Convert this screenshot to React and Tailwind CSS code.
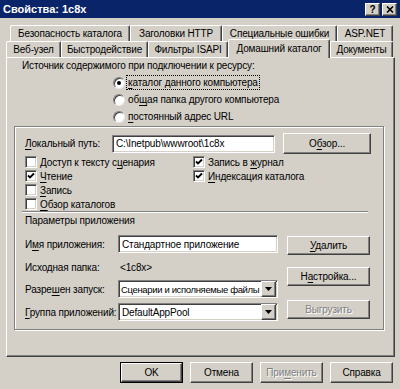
import React from 'react';

const RAISED =
    'border border-t-white border-l-white border-r-[#404040] border-b-[#404040] shadow-[inset_-1px_-1px_0_#808080]';
const SUNKEN =
    'border border-t-[#808080] border-l-[#808080] border-r-white border-b-white shadow-[inset_1px_1px_0_#404040,inset_-1px_-1px_0_#d4d0c8]';
const GREY_TEXT = 'text-[#808080] [text-shadow:1px_1px_0_#fff]';

// "&" marks the access key letter
const Txt = ({ t }) => {
    const i = t.indexOf('&');
    if (i < 0) return <>{t}</>;
    return (
        <>
            {t.slice(0, i)}
            <span className="underline underline-offset-[2px]">{t[i + 1]}</span>
            {t.slice(i + 2)}
        </>
    );
};

const Btn = ({ label, className = '', disabled }) => (
    <div className={`flex items-center justify-center whitespace-nowrap bg-[#d4d0c8] ${RAISED} ${className}`}>
        <span className={disabled ? GREY_TEXT : ''}>
            <Txt t={label} />
        </span>
    </div>
);

const Check = ({ on, label }) => (
    <div className="flex items-center h-[14px] whitespace-nowrap">
        <div className={`w-[12px] h-[12px] bg-white flex items-center justify-center ${SUNKEN}`}>
            {on && (
                <svg width="8" height="8" viewBox="0 0 8 8">
                    <polyline points="1,3.5 3,5.5 7,1.5" fill="none" stroke="#000" strokeWidth="1.8" />
                </svg>
            )}
        </div>
        <span className="ml-[3px]">
            <Txt t={label} />
        </span>
    </div>
);

const Radio = ({ on, label, focus }) => (
    <div className="flex items-center h-[17px] whitespace-nowrap">
        <div className="w-[12px] h-[12px] rounded-full bg-white border border-t-[#808080] border-l-[#808080] border-r-[#e8e8e8] border-b-[#e8e8e8] shadow-[inset_1px_1px_0_#404040] flex items-center justify-center">
            {on && <div className="w-[4px] h-[4px] rounded-full bg-black" />}
        </div>
        <span className={`ml-[2px] px-[1px] ${focus ? 'outline outline-1 outline-dotted outline-black' : ''}`}>
            <Txt t={label} />
        </span>
    </div>
);

const Field = ({ value, select, className = '', textClass = 'pl-[3px]' }) => (
    <div className={`flex items-center bg-white ${SUNKEN} ${className}`}>
        <span className={`flex-1 whitespace-nowrap overflow-hidden ${textClass}`}>{value}</span>
        {select && (
            <div className={`w-[15px] h-full shrink-0 mr-px flex items-center justify-center bg-[#d4d0c8] ${RAISED}`}>
                <svg width="7" height="4" viewBox="0 0 7 4">
                    <path d="M0 0h7L3.5 4z" fill="#000" />
                </svg>
            </div>
        )}
    </div>
);

const Tab = ({ label, w, active }) => (
    <div
        className={`flex items-center justify-center whitespace-nowrap bg-[#d4d0c8] border-t border-l border-r border-t-white border-l-white border-r-[#404040] rounded-t-[2px] shadow-[inset_-1px_0_0_#808080] ${
            active ? 'h-[19px] -mb-px relative z-10 pb-[2px]' : 'h-[16px]'
        }`}
        style={{ width: w }}
    >
        {label}
    </div>
);

const ROW1 = [
    ['Безопасность каталога', 120],
    ['Заголовки HTTP', 92],
    ['Специальные ошибки', 115],
    ['ASP.NET', 56],
];
const ROW2 = [
    ['Веб-узел', 55],
    ['Быстродействие', 87],
    ['Фильтры ISAPI', 80],
    ['Домашний каталог', 102, true],
    ['Документы', 63],
];

export default function App() {
    return (
        <div className="w-[400px] h-[389px] bg-[#d4d0c8] text-black text-[10px] tracking-[-0.15px] leading-[13px] font-['Liberation_Sans',Arial,sans-serif] overflow-hidden flex flex-col">
            {/* title bar */}
            <div className="h-[18px] bg-[#0a246a] flex items-center justify-between pl-[3px] pr-[3px]">
                <span className="text-white font-bold text-[11px] tracking-normal">Свойства: 1c8x</span>
                <div className="flex gap-[2px]">
                    <div className={`w-[15px] h-[13px] bg-[#d4d0c8] flex items-center justify-center font-bold text-[10px] ${RAISED}`}>?</div>
                    <div className={`w-[15px] h-[13px] bg-[#d4d0c8] flex items-center justify-center ${RAISED}`}>
                        <svg width="8" height="7" viewBox="0 0 8 7">
                            <path d="M1 0.5L7 6.5M7 0.5L1 6.5" stroke="#000" strokeWidth="1.6" />
                        </svg>
                    </div>
                </div>
            </div>

            <div className="ml-[6px] w-[389px] mt-[7px]">
                {/* tabs */}
                <div className="flex ml-[4px]">
                    {ROW1.map(([l, w]) => (
                        <Tab key={l} label={l} w={w} />
                    ))}
                </div>
                <div className="flex items-end h-[16px]">
                    {ROW2.map(([l, w, a]) => (
                        <Tab key={l} label={l} w={w} active={a} />
                    ))}
                </div>

                {/* page */}
                <div className={`h-[300px] bg-[#d4d0c8] ${RAISED} pt-px`}>
                    <div className="ml-[15px] whitespace-nowrap">Источник содержимого при подключении к ресурсу:</div>
                    <div className="ml-[106px] mt-[2px] flex flex-col">
                        <Radio on focus label="&каталог данного компьютера" />
                        <Radio label="об&щая папка другого компьютера" />
                        <Radio label="&постоянный адрес URL" />
                    </div>

                    {/* group */}
                    <div className="ml-[7px] mt-px w-[370px] h-[204px] border border-[#808080] shadow-[inset_1px_1px_0_#fff,1px_1px_0_#fff]">
                        <div className="flex items-center h-[21px] mt-[6px] pl-[10px]">
                            <span className="w-[87px] whitespace-nowrap">
                                <Txt t="&Локальный путь:" />
                            </span>
                            <Field value="C:\Inetpub\wwwroot\1c8x" className="w-[163px] h-[18px]" />
                            <Btn label="О&бзор..." className="ml-[8px] w-[88px] h-[21px]" />
                        </div>

                        <div className="flex mt-px pl-[10px]">
                            <div className="w-[168px] flex flex-col">
                                <Check label="Доступ к тексту с&ценария" />
                                <Check on label="&Чтение" />
                                <Check label="&Запись" />
                                <Check label="&Обзор каталогов" />
                            </div>
                            <div className="flex flex-col">
                                <Check on label="Запись в &журнал" />
                                <Check on label="&Индексация каталога" />
                            </div>
                        </div>

                        <div className="ml-[7px] w-[346px] h-[2px] border-t border-t-[#808080] border-b border-b-white" />
                        <div className="pl-[10px] mt-[1px]">Параметры приложения</div>

                        <div className="flex pl-[10px]">
                            <div className="w-[253px] flex flex-col whitespace-nowrap">
                                <div className="flex items-center h-[18px] mt-[8px]">
                                    <span className="w-[93px]">
                                        <Txt t="И&мя приложения:" />
                                    </span>
                                    <Field value="Стандартное приложение" className="w-[160px] h-[18px]" />
                                </div>
                                <div className="flex items-center h-[14px] mt-[7px]">
                                    <span className="w-[95px]">Исходная папка:</span>
                                    <span>&lt;1c8x&gt;</span>
                                </div>
                                <div className="flex items-center h-[18px] mt-[6px]">
                                    <span className="w-[93px]">
                                        <Txt t="Разре&шен запуск:" />
                                    </span>
                                    <Field
                                        select
                                        value="Сценарии и исполняемые файлы"
                                        textClass="pl-[2px] text-[9.5px] tracking-[-0.35px]"
                                        className="w-[160px] h-[18px]"
                                    />
                                </div>
                                <div className="flex items-center h-[18px] mt-[5px]">
                                    <span className="w-[93px]">
                                        <Txt t="&Группа приложений:" />
                                    </span>
                                    <Field select value="DefaultAppPool" className="w-[160px] h-[18px]" />
                                </div>
                            </div>
                            <div className="ml-[9px] flex flex-col">
                                <Btn label="&Удалить" className="mt-[9px] w-[83px] h-[19px]" />
                                <Btn label="Н&астройка..." className="mt-[12px] w-[83px] h-[19px]" />
                                <Btn label="Выгрузить" disabled className="mt-[14px] w-[83px] h-[19px]" />
                            </div>
                        </div>
                    </div>
                </div>
            </div>

            {/* dialog buttons */}
            <div className="flex justify-end gap-[7px] pr-[7px] mt-[5px]">
                <div className="border border-black">
                    <Btn label="OK" className="w-[61px] h-[19px]" />
                </div>
                <Btn label="Отмена" className="w-[63px] h-[21px]" />
                <Btn label="При&менить" disabled className="w-[63px] h-[21px]" />
                <Btn label="Справка" className="w-[63px] h-[21px]" />
            </div>
        </div>
    );
}
